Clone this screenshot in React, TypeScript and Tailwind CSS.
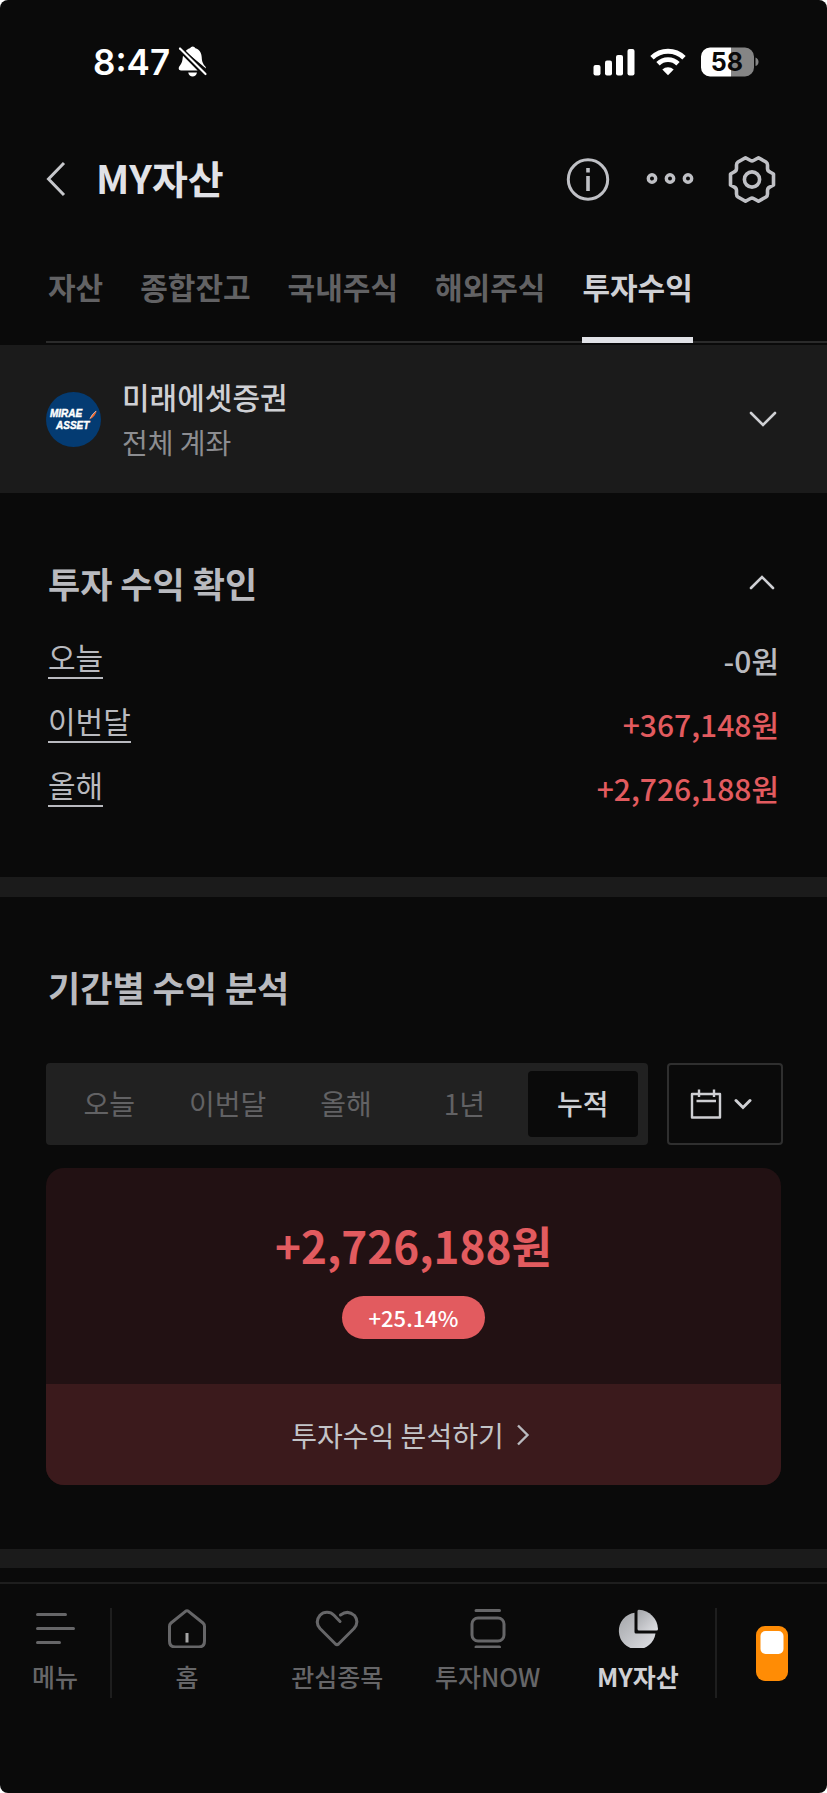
import { useState } from "react";

const tabs = ["자산", "종합잔고", "국내주식", "해외주식", "투자수익"];
const periods = ["오늘", "이번달", "올해", "1년", "누적"];
const profits = [
  { label: "오늘", value: "-0원", up: false },
  { label: "이번달", value: "+367,148원", up: true },
  { label: "올해", value: "+2,726,188원", up: true },
];

function StatusBar() {
  return (
    <div className="flex h-[124px] items-center justify-between pr-[68px] pl-[93px] text-white">
      <div className="flex items-center gap-2">
        <span className="font-['Inter',sans-serif] text-[35px] leading-10 font-semibold">8:47</span>
        <svg width="30" height="32" viewBox="0 0 30 32" fill="currentColor">
          <path d="M7.5 5.5C9 3.3 10.6 2.6 12 2.3a3 3 0 0 1 5.400 0C21.500 3.500 23.500 7 23.700 11c.2 4.500 1 6.500 3.600 9.500.5.6.7 1.300.7 2z" />
          <path d="M5 9.800c-.7 4.500-.6 6.500-2.700 9.200C.8 20.800.6 22 .8 23c.3 1 1 1.400 2.200 1.400h16.600z" />
          <path d="M10.200 26.500h8.800c-.5 2.600-2.300 4-4.400 4s-3.900-1.400-4.400-4z" />
          <path d="M2 2.500l25.500 25.500" fill="none" stroke="#0a0a0a" strokeWidth="5" />
          <path d="M2 2.500l25.500 25.500" fill="none" stroke="currentColor" strokeWidth="2.200" strokeLinecap="round" />
        </svg>
      </div>
      <div className="flex items-center gap-[15px]">
        <svg width="42" height="28" viewBox="0 0 42 28" fill="currentColor">
          <rect x="0.500" y="17" width="7" height="10.500" rx="2" />
          <rect x="12" y="12.500" width="7" height="15" rx="2" />
          <rect x="23" y="7" width="7" height="20.500" rx="2" />
          <rect x="34.500" y="1" width="7" height="26.500" rx="2" />
        </svg>
        <svg width="36" height="28" viewBox="0 0 36 28">
          <g fill="none" stroke="currentColor" strokeWidth="4.800">
            <path d="M2 9.800a22.800 22.800 0 0 1 32 0" />
            <path d="M8 15.700a14.300 14.300 0 0 1 20 0" />
          </g>
          <path fill="currentColor" d="M12.300 21.400a8.300 8.300 0 0 1 11.400 0L18 27.200z" />
        </svg>
        <svg width="58" height="30" viewBox="0 0 58 30">
          <path d="M9 0.500h21v29H9a9 9 0 0 1-9-9v-11a9 9 0 0 1 9-9z" fill="#ffffff" />
          <path d="M30 0.500h14a9 9 0 0 1 9 9v11a9 9 0 0 1-9 9H30z" fill="#858585" />
          <path d="M54.500 10.500c2 .6 3 2.400 3 4.300s-1 3.700-3 4.300z" fill="#858585" />
          <text x="26" y="23.500" textAnchor="middle" fontFamily="Inter, sans-serif" fontSize="25" fontWeight="700" fill="#0a0a0a">
            58
          </text>
        </svg>
      </div>
    </div>
  );
}

function Header() {
  return (
    <header className="flex h-[110px] items-center justify-between pr-[51px] pl-[46px]">
      <div className="flex items-center gap-[30px]">
        <button type="button" aria-label="뒤로">
          <svg width="20" height="36" viewBox="0 0 20 36" fill="none" stroke="#c6c7cb" strokeWidth="3">
            <path d="M18 2L2.500 18L18 34" />
          </svg>
        </button>
        <h1 className="pb-1 text-[39px] leading-[52px] font-bold text-[#e1e2e7]">MY자산</h1>
      </div>
      <div className="flex items-center gap-[34px] text-[#bfc0c5]">
        <button type="button" aria-label="안내">
          <svg width="48" height="48" viewBox="0 0 48 48" fill="none" stroke="currentColor" strokeWidth="3">
            <circle cx="24" cy="24.500" r="19.700" />
            <path d="M24 13v4.500M24 21v15" strokeWidth="3.600" />
          </svg>
        </button>
        <button type="button" aria-label="더보기">
          <svg width="48" height="48" viewBox="0 0 48 48" fill="none" stroke="currentColor" strokeWidth="3.400">
            <circle cx="6" cy="23.500" r="3.700" />
            <circle cx="24" cy="23.500" r="3.700" />
            <circle cx="42" cy="23.500" r="3.700" />
          </svg>
        </button>
        <button type="button" aria-label="설정">
          <svg width="48" height="48" viewBox="0 0 48 48" fill="none" stroke="currentColor" strokeWidth="3.600" strokeLinejoin="round">
            <path d="M17.500 2.700L22.500 5.500Q24 6.300 25.500 5.500L30.500 2.700L38 7Q39.500 8 39.500 10V13.500Q39.500 16 42 17L45.500 19V30L42 32Q39.500 33 39.500 35.500V39Q39.500 41 38 42L30.500 46.300L25.500 43.500Q24 42.700 22.500 43.500L17.500 46.300L10 42Q8.500 41 8.500 39V35.500Q8.500 33 6 32L2.500 30V19L6 17Q8.500 16 8.500 13.500V10Q8.500 8 10 7Z" />
            <circle cx="24" cy="24.500" r="7.600" />
          </svg>
        </button>
      </div>
    </header>
  );
}

function Logo() {
  return (
    <svg width="55" height="55" viewBox="0 0 55 55">
      <circle cx="27.500" cy="27.500" r="27.500" fill="#043b72" />
      <g
        fill="#ffffff"
        stroke="#ffffff"
        strokeWidth="0.400"
        fontFamily="Liberation Sans, sans-serif"
        fontWeight="700"
        fontStyle="italic"
        fontSize="10"
      >
        <text x="4" y="25">MIRAE</text>
        <text x="10" y="37">ASSET</text>
      </g>
      <path d="M43.500 27.500Q46 22 50.800 18.500Q49.500 24.500 43.500 27.500Z" fill="#f0662a" />
      <path d="M44 26.500Q46 22 50 19" fill="none" stroke="#ffffff" strokeWidth="0.600" />
    </svg>
  );
}

function MenuIcon() {
  return (
    <svg width="40" height="40" viewBox="0 0 40 40" fill="none" stroke="currentColor" strokeWidth="3" strokeLinecap="round">
      <path d="M2.500 6.500h28M2.500 20.500h36M2.500 34.500h22" />
    </svg>
  );
}

function HomeIcon() {
  return (
    <svg width="40" height="40" viewBox="0 0 40 40" fill="none" stroke="currentColor" strokeWidth="3" strokeLinejoin="round">
      <path d="M18.500 3.300Q20 2.200 21.500 3.300L36 15Q37.500 16.300 37.500 18.500V33Q37.500 39 31.500 39H8.500Q2.500 39 2.500 33V18.500Q2.500 16.300 4 15Z" />
      <path d="M20 25v9.500" stroke="#a5a5a5" />
    </svg>
  );
}

function HeartIcon() {
  return (
    <svg width="44" height="40" viewBox="0 0 44 40" fill="none" stroke="currentColor" strokeWidth="3" strokeLinecap="round" strokeLinejoin="round">
      <path d="M25 13.500L19 7.300A9.800 9.800 0 0 0 5 7.300Q-0.500 14 5 20.500L20.500 36Q22 37.300 23.500 36L39 20.500Q44.500 14 39.500 7.500Q33 1.500 25.500 7" />
    </svg>
  );
}

function NowIcon() {
  return (
    <svg width="40" height="40" viewBox="0 0 40 40" fill="none" stroke="currentColor" strokeWidth="3" strokeLinecap="round">
      <path d="M8 2.500h23.500M8 39h23.500" />
      <rect x="4" y="10" width="32" height="23" rx="6" />
    </svg>
  );
}

function PieIcon() {
  return (
    <svg width="40" height="40" viewBox="0 0 40 40">
      <defs>
        <linearGradient id="pie" x1="0" y1="0" x2="1" y2="1">
          <stop offset="0" stopColor="#a3a5a9" />
          <stop offset="1" stopColor="#e0e1e5" />
        </linearGradient>
      </defs>
      <path fill="url(#pie)" d="M16.500 4.700V24Q16.500 25.500 18 25.500H37.500A18.400 18.400 0 1 1 16.500 4.700Z" />
      <path fill="url(#pie)" d="M19.500 3Q19.500 1.700 21 1.700A20 20 0 0 1 40 21Q40 22.500 38.500 22.500H21Q19.500 22.500 19.500 21Z" />
    </svg>
  );
}

const navItems = [
  { label: "홈", icon: <HomeIcon /> },
  { label: "관심종목", icon: <HeartIcon /> },
  { label: "투자NOW", icon: <NowIcon /> },
  { label: "MY자산", icon: <PieIcon />, active: true },
];

function BottomNav() {
  return (
    <nav className="flex border-t-2 border-[#1e1e1e] pt-6 pb-[95px] text-[25px] leading-8 font-medium text-[#666668]">
      <a
        href="#menu"
        className="flex h-[90px] w-[112px] flex-col items-center justify-between border-r-2 border-[#1e1e1e] pb-[6px]"
      >
        <MenuIcon />
        메뉴
      </a>
      <div className="grid flex-1 grid-cols-4 pr-[2px]">
        {navItems.map((item) => (
          <a
            key={item.label}
            href={`#${item.label}`}
            className={
              item.active
                ? "flex h-[90px] flex-col items-center justify-between pb-[6px] font-bold text-[#cfd0d4]"
                : "flex h-[90px] flex-col items-center justify-between pb-[6px]"
            }
          >
            {item.icon}
            {item.label}
          </a>
        ))}
      </div>
      <button type="button" aria-label="위젯" className="flex h-[90px] w-[112px] items-center justify-center border-l-2 border-[#1e1e1e]">
        <svg width="32" height="55" viewBox="0 0 32 55">
          <rect width="32" height="55" rx="9" fill="#ff8c05" />
          <rect x="4.500" y="5" width="23" height="23" rx="5" fill="#ffffff" />
        </svg>
      </button>
    </nav>
  );
}

export default function App() {
  const [tab, setTab] = useState("투자수익");
  const [period, setPeriod] = useState("누적");
  const [open, setOpen] = useState(true);

  return (
    <div className="min-h-screen bg-white">
      <div className="flex min-h-screen flex-col overflow-hidden rounded-lg bg-[#0a0a0a] font-['Noto_Sans_CJK_KR',sans-serif]">
        <StatusBar />
        <Header />

        <div className="mb-[2px] ml-[46px] flex gap-[37px] border-b-2 border-[#2b2b2b] pl-[2px]">
          {tabs.map((name) => (
            <button
              key={name}
              type="button"
              onClick={() => setTab(name)}
              className={
                name === tab
                  ? "-mb-[2px] border-b-[6px] border-[#e1e2e7] pt-[30px] pb-[29px] text-[30px] leading-[44px] font-bold text-[#cfd0d4]"
                  : "-mb-[2px] border-b-[6px] border-transparent pt-[30px] pb-[29px] text-[30px] leading-[44px] font-bold text-[#626264]"
              }
            >
              {name}
            </button>
          ))}
        </div>

        <button type="button" className="flex h-[148px] items-center bg-[#1b1b1b] pr-[50px] pl-[46px] text-left">
          <Logo />
          <span className="ml-[21px] flex flex-1 flex-col">
            <span className="text-[30px] leading-[46px] font-medium text-[#cfd0d4]">미래에셋증권</span>
            <span className="text-[28px] leading-[46px] text-[#8c8d91]">전체 계좌</span>
          </span>
          <svg width="28" height="16" viewBox="0 0 28 16" fill="none" stroke="#cfd0d4" strokeWidth="2.600" strokeLinecap="round">
            <path d="M2 2l12 12L26 2" />
          </svg>
        </button>

        <section className="px-12 pt-16 pb-[57px]">
          <div className="flex items-center justify-between">
            <h2 className="text-[35px] leading-[52px] font-bold text-[#b9babf]">투자 수익 확인</h2>
            <button type="button" aria-label="접기" aria-expanded={open} onClick={() => setOpen(!open)} className="mr-1">
              <svg width="26" height="16" viewBox="0 0 26 16" fill="none" stroke="#cfd0d4" strokeWidth="2.600" strokeLinecap="round">
                <path d="M2 13L13 2l11 11" />
              </svg>
            </button>
          </div>
          {open && (
            <dl className="mt-[19px] text-[30px]">
              {profits.map((row) => (
                <div key={row.label} className="flex h-16 items-center justify-between">
                  <dt className="border-b-2 border-[#b9babf] pb-[6px] leading-[30px] text-[#b9babf]">{row.label}</dt>
                  <dd className={row.up ? "leading-9 font-medium text-[#e25b5f]" : "leading-9 font-medium text-[#b9babf]"}>
                    {row.value}
                  </dd>
                </div>
              ))}
            </dl>
          )}
        </section>

        <div className="h-5 bg-[#1b1b1b]" />

        <section className="pt-16 pb-16">
          <h2 className="px-12 text-[35px] leading-[52px] font-bold text-[#b9babf]">기간별 수익 분석</h2>

          <div className="mt-[50px] mr-[44px] ml-[46px] flex h-[82px] gap-[19px]">
            <div className="grid flex-1 grid-cols-5 rounded bg-[#212121] py-2 pr-[6px] pl-1">
              {periods.map((name) => (
                <button
                  key={name}
                  type="button"
                  onClick={() => setPeriod(name)}
                  className={
                    name === period
                      ? "mx-1 rounded bg-[#0a0a0a] pb-[2px] text-[28px] font-medium text-[#cfd0d4]"
                      : "mx-1 rounded pb-[2px] text-[28px] text-[#626264]"
                  }
                >
                  {name}
                </button>
              ))}
            </div>
            <button
              type="button"
              aria-label="기간 선택"
              className="flex w-[116px] items-center justify-center gap-3 rounded border-2 border-[#2f2f2f] pr-2"
            >
              <svg width="32" height="30" viewBox="0 0 32 30" fill="none" stroke="#cfd0d4" strokeWidth="2.400" strokeLinejoin="round">
                <path d="M2 5h28v23.500H2zM6.500 12h19.500M9 0.500v7.500M24 0.500v7.500" />
              </svg>
              <svg width="18" height="12" viewBox="0 0 18 12" fill="none" stroke="#cfd0d4" strokeWidth="3" strokeLinecap="round">
                <path d="M2 2.500l7 7 7-7" />
              </svg>
            </button>
          </div>

          <div className="mx-[46px] mt-[23px] overflow-hidden rounded-[18px] bg-[#221113]">
            <div className="flex flex-col items-center pt-[46px] pb-[45px]">
              <strong className="text-[44px] leading-[62px] font-bold text-[#e25b5f]">+2,726,188원</strong>
              <span className="mt-5 rounded-full bg-[#e25b5f] px-[27px] text-[22px] leading-[43px] font-medium text-white">
                +25.14%
              </span>
            </div>
            <a href="#analysis" className="flex h-[101px] items-center justify-center gap-3 bg-[#3b1a1c] pr-[6px] text-[28px] text-[#c3c4c8]">
              투자수익 분석하기
              <svg width="14" height="22" viewBox="0 0 14 22" fill="none" stroke="#b9babf" strokeWidth="2.400">
                <path d="M2 1.500L11.500 11L2 20.500" />
              </svg>
            </a>
          </div>
        </section>

        <div className="mb-[14px] h-[19px] bg-[#1b1b1b]" />
        <BottomNav />
      </div>
    </div>
  );
}
